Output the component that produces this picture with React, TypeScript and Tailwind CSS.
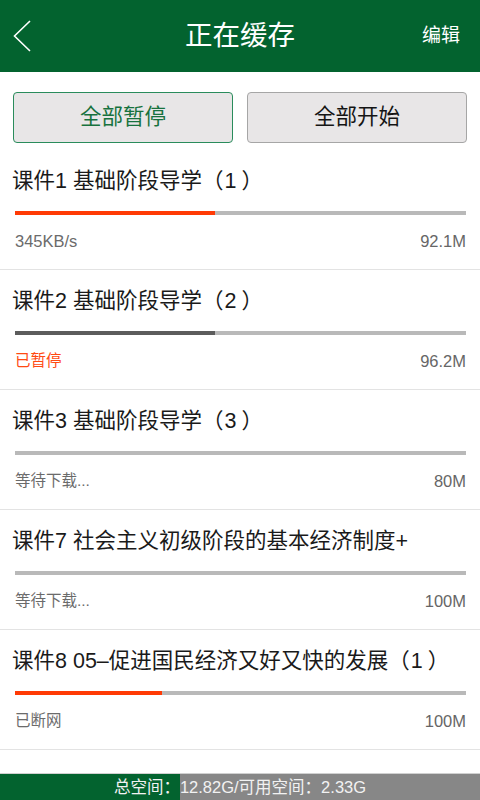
import React from "react";

const FONT = { fontFamily: '"Liberation Sans", "Noto Sans CJK SC", sans-serif' };

type Item = {
  name: string;
  num: string;
  fill: number;
  fillColor: string;
  status: string;
  statusColor: string;
  size: string;
};

const items: Item[] = [
  { name: "课件1 基础阶段导学", num: "1", fill: 200, fillColor: "#ff3a05", status: "345KB/s", statusColor: "#6b6b6b", size: "92.1M" },
  { name: "课件2 基础阶段导学", num: "2", fill: 200, fillColor: "#5c5c5c", status: "已暂停", statusColor: "#ff4a12", size: "96.2M" },
  { name: "课件3 基础阶段导学", num: "3", fill: 0, fillColor: "#ff3a05", status: "等待下载...", statusColor: "#6b6b6b", size: "80M" },
  { name: "课件7 社会主义初级阶段的基本经济制度+", num: "", fill: 0, fillColor: "#ff3a05", status: "等待下载...", statusColor: "#6b6b6b", size: "100M" },
  { name: "课件8 05–促进国民经济又好又快的发展", num: "1", fill: 147, fillColor: "#ff3a05", status: "已断网", statusColor: "#6b6b6b", size: "100M" },
];

function Row({ it }: { it: Item }) {
  return (
    <div className="h-[120px] border-b border-[#e3e3e3] pt-[16px]">
      <div className="h-[30px] pl-[12px] text-[21.5px] leading-[30px] text-[#1a1a1a] whitespace-nowrap">
        {it.name}
        {it.num !== "" && (
          <>
            <span className="-mr-[2px]">（</span>
            <span className="px-[3px]">{it.num}</span>
            <span className="ml-[2px]">）</span>
          </>
        )}
      </div>
      <div className="ml-[15px] mr-[14px] mt-[15px] flex h-[4px] bg-[#b9b9b9]">
        <div className="h-full" style={{ width: it.fill, backgroundColor: it.fillColor }} />
      </div>
      <div className="ml-[15px] mr-[14px] mt-[16px] flex h-[20px] items-center justify-between leading-[20px]">
        <span className={it.status.startsWith("3") ? "text-[16.5px]" : "text-[15.5px]"} style={{ color: it.statusColor }}>
          {it.status}
        </span>
        <span className="text-[16.5px] text-[#666666]">{it.size}</span>
      </div>
    </div>
  );
}

export default function App() {
  return (
    <div className="flex h-[800px] w-[480px] flex-col bg-white" style={FONT}>
      <div className="grid h-[72px] grid-cols-[1fr_auto_1fr] items-center bg-[#03632f] px-[13px]">
        <svg width="20" height="34" viewBox="0 0 20 34">
          <polyline points="17,2 1.5,17 17,32" fill="none" stroke="#ffffff" strokeWidth="1.6" />
        </svg>
        <div className="text-[27.5px] text-white">正在缓存</div>
        <div className="mr-[7px] justify-self-end text-[19px] text-white">编辑</div>
      </div>
      <div className="flex gap-[14px] px-[13px] pt-[20px]">
        <div className="flex h-[51px] w-[220px] items-center justify-center rounded-[4px] border border-[#2a8c5c] bg-[#e8e6e7] text-[21.5px] text-[#17723e]">
          全部暂停
        </div>
        <div className="flex h-[51px] w-[220px] items-center justify-center rounded-[4px] border border-[#a6a6a6] bg-[#e8e6e7] text-[21.5px] text-[#141414]">
          全部开始
        </div>
      </div>
      <div className="mt-[7px] flex-1">
        {items.map((it, i) => (
          <Row key={i} it={it} />
        ))}
      </div>
      <div className="grid h-[27px] border-t border-[#d0d0d0] bg-[#878787]">
        <div className="col-start-1 row-start-1 h-full w-[180px] bg-[#03632f]" />
        <div className="col-start-1 row-start-1 flex items-center justify-center text-[16.5px] text-[#f2f2f2]">
          总空间：12.82G/可用空间：2.33G
        </div>
      </div>
    </div>
  );
}
